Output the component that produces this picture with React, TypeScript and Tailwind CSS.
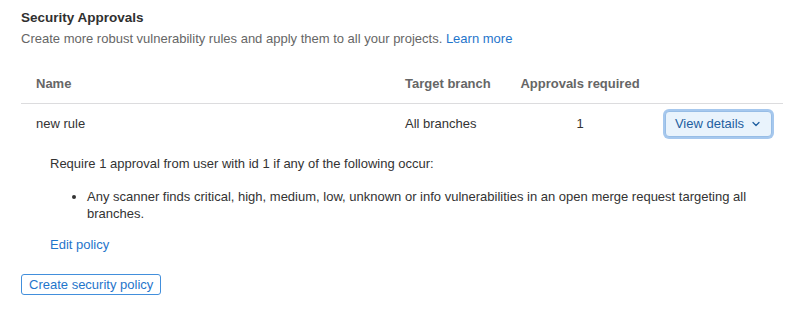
import React from "react";
import { ChevronDown } from "lucide-react";

const App = () => {
  return (
    <div
      className="w-[807px] h-[310px] bg-white px-[21px] pt-[9px] text-[13px] text-[#333]"
      style={{ fontFamily: "'Liberation Sans', Arial, sans-serif" }}
    >
      <h3 className="text-[13.5px] font-bold leading-[17px] text-[#303030]">
        Security Approvals
      </h3>
      <p className="mt-[4px] leading-[18px] text-[#666]">
        Create more robust vulnerability rules and apply them to all your projects.{" "}
        <a className="text-[#1f75cb]">Learn more</a>
      </p>

      <div className="mt-[17px] w-[762px]">
        <div className="grid grid-cols-[369px_116px_148px_1fr] border-b border-[#dcdcde] h-[39px] items-center font-bold text-[#666] whitespace-nowrap">
          <div className="px-[15px]">Name</div>
          <div className="px-[15px]">Target branch</div>
          <div className="px-[4px] text-center">Approvals required</div>
          <div />
        </div>
        <div className="grid grid-cols-[369px_116px_148px_1fr] h-[40px] items-center whitespace-nowrap">
          <div className="px-[15px]">new rule</div>
          <div className="px-[15px]">All branches</div>
          <div className="px-[15px] text-center">1</div>
          <div className="flex justify-center">
            <button className="flex items-center gap-[6px] h-[26px] px-[9px] rounded-[4px] border border-[#97bde6] bg-[#e9f3fc] text-[#1f5fa0] ring-[2px] ring-[#a6c8ee]">
              View details
              <ChevronDown className="w-[12px] h-[12px]" strokeWidth={2.5} />
            </button>
          </div>
        </div>

        <div className="pl-[29px] pt-[11px] pb-[5px]">
          <p className="leading-[18px]">
            Require 1 approval from user with id 1 if any of the following occur:
          </p>
          <ul className="mt-[15px] pl-[37px] list-disc leading-[17px]">
            <li className="pr-[20px]">
              Any scanner finds critical, high, medium, low, unknown or info vulnerabilities in an open merge request targeting all branches.
            </li>
          </ul>
          <a className="block mt-[14px] leading-[18px] text-[#1f75cb]">Edit policy</a>
        </div>
      </div>

      <button className="mt-[15px] h-[21px] px-[7px] rounded-[3px] border border-[#428fdc] text-[#1f75cb] leading-[19px]">
        Create security policy
      </button>
    </div>
  );
};

export default App;
